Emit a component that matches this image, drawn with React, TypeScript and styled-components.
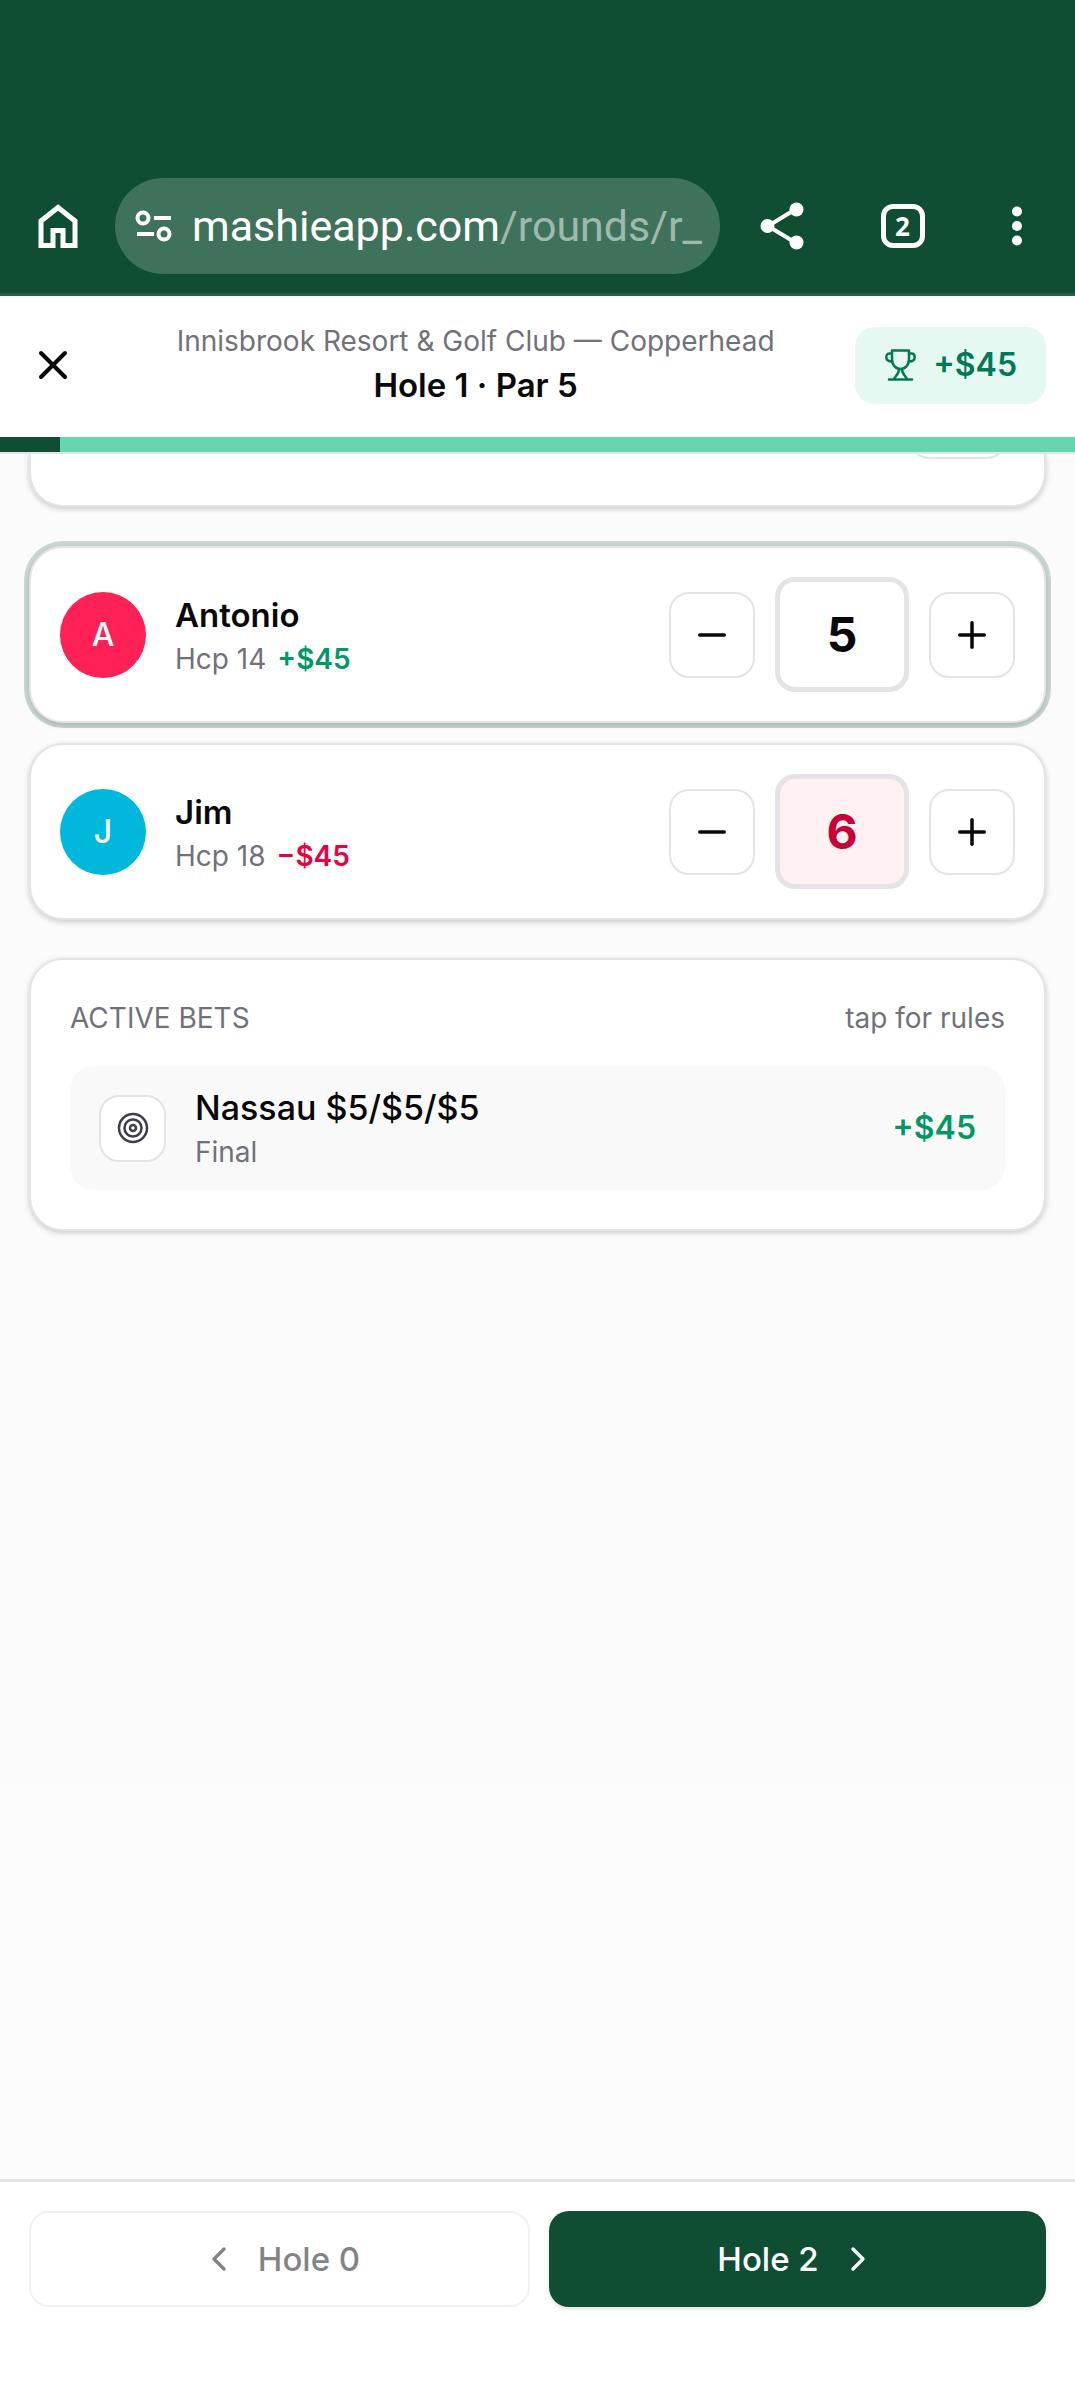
import React, { useState } from "react";
import styled, { createGlobalStyle, css } from "styled-components";
import { ChevronLeft, ChevronRight, Minus, Plus, X } from "lucide-react";

const color = {
  brand: "#0f4e33",
  pill: "#3f725b",
  mint: "#64d5ae",
  line: "#e4e4e7",
  surface: "#ffffff",
  ink: "#09090b",
  muted: "#71717b",
  win: "#009966",
  loss: "#ec003f",
};

const GlobalStyle = createGlobalStyle`
  *, *::before, *::after { box-sizing: border-box; }
  html, body, #root { height: 100%; }
  body {
    margin: 0;
    background: ${color.surface};
    color: ${color.ink};
    font-family: Inter, "Liberation Sans", sans-serif;
    font-size: 32px;
    line-height: 48px;
  }
  button, input { font: inherit; color: inherit; }
  button { padding: 0; border: 0; background: none; cursor: pointer; }
  h1, h2, p { margin: 0; }
  svg { display: block; flex: none; }
`;

const Screen = styled.div`
  display: flex;
  flex-direction: column;
  height: 100vh;
`;

const BrowserBar = styled.header`
  display: flex;
  align-items: center;
  flex: none;
  padding: 178px 42px 19px 36px;
  background: ${color.brand};
  border-bottom: 3px solid #2a6148;
  color: #fff;
`;

const BarButton = styled.button`
  display: flex;
  justify-content: center;
  align-items: center;
  width: 44px;
  height: 48px;
`;

const MoreButton = styled(BarButton)`
  width: 32px;
`;

const BarActions = styled.div`
  display: flex;
  align-items: center;
  justify-content: space-between;
  width: 273px;
  margin-left: 40px;
`;

const AddressPill = styled.div`
  display: flex;
  align-items: center;
  flex: 1;
  gap: 20px;
  min-width: 0;
  height: 96px;
  margin-left: 35px;
  padding: 0 12px 0 19px;
  border-radius: 48px;
  background: ${color.pill};
`;

const Address = styled.span`
  flex: 1;
  white-space: nowrap;
  font-family: Roboto, "Noto Sans", sans-serif;
  font-size: 43px;
  line-height: 60px;
`;

const AddressPath = styled.span`
  color: #a0b9ae;
`;

const TabCount = styled.span`
  display: flex;
  justify-content: center;
  align-items: center;
  width: 44px;
  height: 44px;
  border: 5px solid #fff;
  border-radius: 12px;
  font-family: "Open Sans", sans-serif;
  font-size: 26px;
  font-weight: 700;
  line-height: 30px;
`;

const RoundHeader = styled.header`
  display: flex;
  align-items: center;
  flex: none;
  height: 141px;
  padding: 0 29px 3px;
`;

const CloseButton = styled.button`
  display: flex;
  justify-content: center;
  align-items: center;
  width: 48px;
  height: 88px;
`;

const Titles = styled.div`
  flex: 1;
  min-width: 0;
  padding: 0 10px 0 29px;
  text-align: center;
`;

const Caption = styled.p`
  color: ${color.muted};
  font-size: 28px;
  line-height: 40px;
`;

const HoleTitle = styled.h1`
  font-size: 33px;
  font-weight: 600;
  line-height: 48px;
`;

const Winnings = styled.button`
  display: flex;
  align-items: center;
  gap: 16px;
  height: 77px;
  padding: 0 29px;
  border-radius: 20px;
  background: #e5f8f1;
  && { color: #007a55; }
  font-size: 32px;
  font-weight: 600;
`;

const ProgressTrack = styled.div`
  flex: none;
  height: 17px;
  background: ${color.mint};
  border-bottom: 2px solid ${color.line};
`;

const ProgressFill = styled.div`
  height: 15px;
  background: ${color.brand};
`;

const Scroller = styled.main`
  display: flex;
  flex-direction: column;
  flex: 1;
  min-height: 0;
  overflow: hidden;
  padding: 0 29px;
  background: linear-gradient(#fbfbfb 77%, #fcfcfc 77%);
`;

const cardFrame = css`
  background: ${color.surface};
  border: 2px solid ${color.line};
  border-radius: 34px;
`;

const liftShadow = "0 2px 7px rgba(0, 0, 0, 0.1), 0 2px 5px rgba(0, 0, 0, 0.1)";

const PreviousCard = styled.section`
  ${cardFrame}
  display: flex;
  justify-content: flex-end;
  flex: none;
  height: 53px;
  padding-right: 37px;
  border-top: 0;
  border-radius: 0 0 34px 34px;
  box-shadow: ${liftShadow};
`;

const ClippedButton = styled.button`
  && {
    width: 98px;
    height: 5px;
    overflow: hidden;
  }
  &::before {
    content: "";
    display: block;
    height: 87px;
    margin-top: -82px;
    border: 2px solid ${color.line};
    border-radius: 20px;
  }
`;

const Players = styled.ul`
  display: flex;
  flex-direction: column;
  gap: 20px;
  margin: 39px 0 0;
  padding: 0;
  list-style: none;
`;

const PlayerCard = styled.li<{ $active: boolean }>`
  ${cardFrame}
  display: flex;
  align-items: center;
  gap: 29px;
  padding: 29px;
  box-shadow: ${(p) => (p.$active ? "0 0 0 5px rgba(15, 78, 51, 0.2), " : "")}${liftShadow};
`;

const Avatar = styled.span<{ $fill: string }>`
  display: flex;
  justify-content: center;
  align-items: center;
  flex: none;
  width: 86px;
  height: 86px;
  border-radius: 50%;
  background: ${(p) => p.$fill};
  color: #fff;
  font-size: 32px;
  font-weight: 500;
`;

const PlayerText = styled.div`
  flex: 1;
  min-width: 0;
`;

const PlayerName = styled.h2`
  font-size: 33px;
  font-weight: 600;
  line-height: 48px;
`;

const PlayerMeta = styled.p`
  display: flex;
  gap: 11px;
  color: ${color.muted};
  font-size: 28px;
  line-height: 40px;
`;

const Amount = styled.strong<{ $down?: boolean }>`
  color: ${(p) => (p.$down ? color.loss : color.win)};
  font-weight: 600;
`;

const Stepper = styled.div`
  display: flex;
  align-items: center;
  gap: 20px;
`;

const StepButton = styled.button`
  display: flex;
  justify-content: center;
  align-items: center;
  && { border: 2px solid ${color.line}; }
  width: 86px;
  height: 86px;
  border-radius: 20px;
`;

const ScoreInput = styled.input<{ $over: boolean }>`
  width: 134px;
  height: 115px;
  padding: 0;
  border: 5px solid ${color.line};
  border-radius: 20px;
  background: ${(p) => (p.$over ? "#fff0f1" : color.surface)};
  && { color: ${(p) => (p.$over ? "#c70036" : color.ink)}; }
  font-size: 48px;
  font-weight: 700;
  text-align: center;
  outline: none;
`;

const BetsCard = styled.section`
  ${cardFrame}
  flex: none;
  margin-top: 38px;
  padding: 38px 39px 39px;
  box-shadow: ${liftShadow};
`;

const BetsHead = styled.div`
  display: flex;
  justify-content: space-between;
  align-items: center;
  margin-bottom: 28px;
  color: ${color.muted};
  font-size: 28px;
  line-height: 40px;
`;

const BetsTitle = styled.h2`
  font-size: 28px;
  font-weight: 400;
`;

const BetRow = styled.button`
  display: flex;
  align-items: center;
  gap: 29px;
  width: 100%;
  && { padding: 18px 29px; }
  border-radius: 24px;
  background: #f9f9f9;
  text-align: left;
`;

const BetIcon = styled.span`
  display: flex;
  justify-content: center;
  align-items: center;
  width: 67px;
  height: 67px;
  border: 2px solid ${color.line};
  border-radius: 20px;
  background: ${color.surface};
  color: #3f3f46;
`;

const BetText = styled.span`
  display: flex;
  flex-direction: column;
  flex: 1;
`;

const BetName = styled.span`
  font-size: 34px;
  font-weight: 500;
  line-height: 48px;
`;

const BetState = styled.span`
  color: ${color.muted};
  font-size: 28px;
  line-height: 40px;
`;

const Footer = styled.footer`
  display: flex;
  flex: none;
  gap: 19px;
  padding: 29px 29px 86px;
  border-top: 3px solid ${color.line};
  background: ${color.surface};
`;

const HoleButton = styled.button<{ $primary?: boolean }>`
  display: flex;
  justify-content: center;
  align-items: center;
  flex: 1 1 0;
  gap: 19px;
  height: 96px;
  border-radius: 20px;
  font-size: 33px;
  font-weight: 500;
  ${(p) =>
    p.$primary
      ? css`
          background: ${color.brand};
          && { color: #fff; }
          box-shadow: 0 2px 5px rgba(0, 0, 0, 0.12);
        `
      : css`
          && { border: 2px solid ${color.line}; }
          opacity: 0.5;
        `}
`;

const HomeIcon = () => (
  <svg width="40" height="46" viewBox="0 0 40 46" fill="none" stroke="#fff" strokeWidth="5">
    <path d="M3 18 20 4.500 37 18v24.500H25V27.500H15v15H3Z" />
  </svg>
);

const TuneIcon = () => (
  <svg width="38" height="32" viewBox="0 0 38 32" fill="none" stroke="#fff" strokeWidth="4">
    <circle cx="9" cy="8" r="5.500" />
    <path d="M20 8h17M3 24h17" />
    <circle cx="30" cy="24" r="5.500" />
  </svg>
);

const ShareIcon = () => (
  <svg width="44" height="48" viewBox="0 0 44 48" fill="#fff" stroke="#fff">
    <path d="M36 7 8 24l28 17" fill="none" strokeWidth="4" />
    <circle cx="36.500" cy="7.500" r="7" stroke="none" />
    <circle cx="7.500" cy="24" r="7" stroke="none" />
    <circle cx="36.500" cy="40.500" r="7" stroke="none" />
  </svg>
);

const MoreIcon = () => (
  <svg width="12" height="40" viewBox="0 0 12 40" fill="#fff">
    <circle cx="6" cy="5.500" r="5" />
    <circle cx="6" cy="20" r="5" />
    <circle cx="6" cy="34.500" r="5" />
  </svg>
);

const TrophyIcon = () => (
  <svg
    width="33"
    height="34"
    viewBox="0 0 33 34"
    fill="none"
    stroke="currentColor"
    strokeWidth="2.500"
    strokeLinecap="round"
    strokeLinejoin="round"
  >
    <path d="M8 2.500h17V11.500c0 5-3.500 9.500-8.500 9.500S8 16.500 8 11.500Z" />
    <path d="M8 5.500H5.500C3.500 5.500 2.300 7 2.300 9c0 3 2.200 4.500 5.900 4.500M25 5.500h2.500c2 0 3.200 1.500 3.200 3.500 0 3-2.200 4.500-5.900 4.500" />
    <path d="M15 21.500c0 4-3 6-5.500 10M18 21.500c0 4 3 6 5.500 10M5 31.500h23" />
  </svg>
);

const TargetIcon = () => (
  <svg width="32" height="32" viewBox="0 0 32 32" fill="none" stroke="currentColor" strokeWidth="2.500">
    <circle cx="16" cy="16" r="14" />
    <circle cx="16" cy="16" r="8.500" />
    <circle cx="16" cy="16" r="3" />
  </svg>
);

type Player = { name: string; hcp: number; avatar: string; money: string; down: boolean; active: boolean };

const players: Player[] = [
  { name: "Antonio", hcp: 14, avatar: "#ff2056", money: "+$45", down: false, active: true },
  { name: "Jim", hcp: 18, avatar: "#00b8db", money: "−$45", down: true, active: false },
];

const par = 5;

export default function App() {
  const [scores, setScores] = useState([5, 6]);
  const setScore = (index: number, value: number) =>
    setScores((all) => all.map((s, i) => (i === index ? value : s)));

  return (
    <>
      <GlobalStyle />
      <Screen>
        <BrowserBar>
          <BarButton aria-label="Home">
            <HomeIcon />
          </BarButton>
          <AddressPill>
            <TuneIcon />
            <Address>
              mashieapp.com<AddressPath>/rounds/r_</AddressPath>
            </Address>
          </AddressPill>
          <BarActions>
            <BarButton aria-label="Share">
              <ShareIcon />
            </BarButton>
            <BarButton aria-label="Tabs">
              <TabCount>2</TabCount>
            </BarButton>
            <MoreButton aria-label="More">
              <MoreIcon />
            </MoreButton>
          </BarActions>
        </BrowserBar>

        <RoundHeader>
          <CloseButton aria-label="Close">
            <X size={48} />
          </CloseButton>
          <Titles>
            <Caption>Innisbrook Resort &amp; Golf Club — Copperhead</Caption>
            <HoleTitle>Hole 1 · Par 5</HoleTitle>
          </Titles>
          <Winnings>
            <TrophyIcon />
            +$45
          </Winnings>
        </RoundHeader>
        <ProgressTrack>
          <ProgressFill style={{ width: `${(1 / 18) * 100}%` }} />
        </ProgressTrack>

        <Scroller>
          <PreviousCard>
            <ClippedButton aria-label="More options" />
          </PreviousCard>

          <Players>
            {players.map((player, i) => (
              <PlayerCard key={player.name} $active={player.active}>
                <Avatar $fill={player.avatar}>{player.name[0]}</Avatar>
                <PlayerText>
                  <PlayerName>{player.name}</PlayerName>
                  <PlayerMeta>
                    <span>Hcp {player.hcp}</span>
                    <Amount $down={player.down}>{player.money}</Amount>
                  </PlayerMeta>
                </PlayerText>
                <Stepper>
                  <StepButton aria-label={`Lower ${player.name}'s score`} onClick={() => setScore(i, scores[i] - 1)}>
                    <Minus size={42} />
                  </StepButton>
                  <ScoreInput
                    aria-label={`${player.name}'s score`}
                    inputMode="numeric"
                    value={scores[i]}
                    $over={scores[i] > par}
                    onChange={(e) => setScore(i, Number(e.target.value) || 0)}
                  />
                  <StepButton aria-label={`Raise ${player.name}'s score`} onClick={() => setScore(i, scores[i] + 1)}>
                    <Plus size={42} />
                  </StepButton>
                </Stepper>
              </PlayerCard>
            ))}
          </Players>

          <BetsCard>
            <BetsHead>
              <BetsTitle>ACTIVE BETS</BetsTitle>
              <span>tap for rules</span>
            </BetsHead>
            <BetRow>
              <BetIcon>
                <TargetIcon />
              </BetIcon>
              <BetText>
                <BetName>Nassau $5/$5/$5</BetName>
                <BetState>Final</BetState>
              </BetText>
              <Amount>+$45</Amount>
            </BetRow>
          </BetsCard>
        </Scroller>

        <Footer>
          <HoleButton disabled>
            <ChevronLeft size={40} />
            Hole 0
          </HoleButton>
          <HoleButton $primary>
            Hole 2
            <ChevronRight size={40} />
          </HoleButton>
        </Footer>
      </Screen>
    </>
  );
}
